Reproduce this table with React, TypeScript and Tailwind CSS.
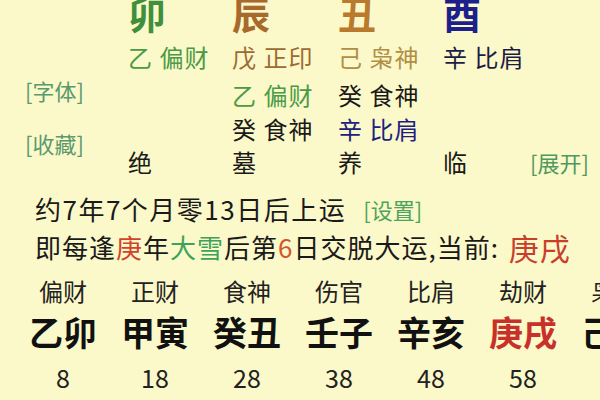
import React from "react";

const F = { fontFamily: '"Noto Sans CJK SC", "Noto Sans", sans-serif' };

export default function App() {
  const cols = [
    { l: "偏财", p: "乙卯", n: "8", red: false },
    { l: "正财", p: "甲寅", n: "18", red: false },
    { l: "食神", p: "癸丑", n: "28", red: false },
    { l: "伤官", p: "壬子", n: "38", red: false },
    { l: "比肩", p: "辛亥", n: "48", red: false },
    { l: "劫财", p: "庚戌", n: "58", red: true },
    { l: "枭神", p: "己酉", n: "", red: false },
  ];
  return (
    <div
      className="w-[600px] h-[400px] overflow-hidden bg-[#fbf8c9] text-[#1a1a1a]"
      style={F}
    >
      {/* Top section */}
      <div className="flex mt-[-11px]">
        <div className="w-[128px] shrink-0 flex flex-col pl-[25px]">
          <div className="h-[84px]" />
          <div className="h-[34px] flex items-center text-[22px] text-[#5a9a6e] leading-none">[字体]</div>
          <div className="h-[19px]" />
          <div className="h-[34px] flex items-center text-[22px] text-[#5a9a6e] leading-none">[收藏]</div>
        </div>
        <div className="flex-1 flex flex-col">
          <div className="flex h-[48px] items-center text-[38px] leading-none font-bold">
            <div className="w-[104px] text-[#3f8f3c]">卯</div>
            <div className="w-[106px] text-[#a8692c]">辰</div>
            <div className="w-[105px] text-[#b97a2e]">丑</div>
            <div className="w-[105px] text-[#1c1f8c]">酉</div>
          </div>
          <div className="flex h-[40px] items-center text-[24px] leading-none tracking-[1px]">
            <div className="w-[104px] text-[#4b9a46]">乙 偏财</div>
            <div className="w-[106px] text-[#9c6a32]">戊 正印</div>
            <div className="w-[105px] text-[#b08e44]">己 枭神</div>
            <div className="w-[105px] text-[#1b1d45]">辛 比肩</div>
          </div>
          <div className="flex h-[36px] items-center text-[24px] leading-none tracking-[1px]">
            <div className="w-[104px]" />
            <div className="w-[106px] text-[#4b9a46]">乙 偏财</div>
            <div className="w-[105px] text-[#1a1a1a]">癸 食神</div>
          </div>
          <div className="flex h-[32px] items-center text-[24px] leading-none tracking-[1px]">
            <div className="w-[104px]" />
            <div className="w-[106px] text-[#1a1a1a]">癸 食神</div>
            <div className="w-[105px] text-[#1d2080]">辛 比肩</div>
          </div>
          <div className="flex h-[34px] items-center text-[24px] leading-none">
            <div className="w-[104px]">绝</div>
            <div className="w-[106px]">墓</div>
            <div className="w-[105px]">养</div>
            <div className="w-[87px]">临</div>
            <div className="text-[22px] text-[#4e9a5e]">[展开]</div>
          </div>
        </div>
      </div>

      {/* Luck lines */}
      <div className="pl-[35px] mt-[12px] flex items-center h-[36px] leading-none">
        <span className="text-[26px] tracking-[1.5px]">约7年7个月零13日后上运</span>
        <span className="ml-[17px] text-[22px] text-[#4ea35e]">[设置]</span>
      </div>
      <div className="pl-[35px] mt-[1px] flex items-center h-[38px] leading-none text-[26px] tracking-[1px] whitespace-pre">
        <span>即每逢</span>
        <span className="text-[#d2432c]">庚</span>
        <span>年</span>
        <span className="text-[#3ca35a]">大雪</span>
        <span>后第</span>
        <span className="text-[#d5552a]">6</span>
        <span>日交脱大运,当前: </span>
        <span className="text-[30px] text-[#c8402c] ml-[3px]">庚戌</span>
      </div>

      {/* Pillars */}
      <div className="flex pl-[17px] mt-[8px]">
        {cols.map((c) => (
          <div key={c.p} className="w-[92px] shrink-0 flex flex-col items-center">
            <div className="h-[34px] flex items-center text-[24px] leading-none text-[#222]">{c.l}</div>
            <div
              className={
                "h-[48px] flex items-center text-[34px] leading-none font-bold " +
                (c.red ? "text-[#c8302a]" : "text-[#111]")
              }
            >
              {c.p}
            </div>
            <div className="h-[42px] flex items-center text-[25px] leading-none text-[#222]">{c.n}</div>
          </div>
        ))}
      </div>
    </div>
  );
}
